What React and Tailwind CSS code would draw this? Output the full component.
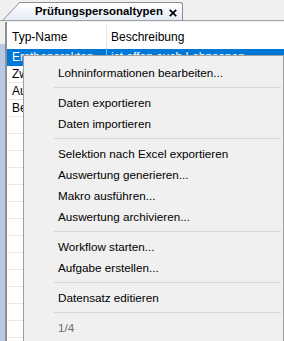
import React from "react";

const items = [
  { t: "Lohninformationen bearbeiten..." },
  { sep: true },
  { t: "Daten exportieren" },
  { t: "Daten importieren" },
  { sep: true },
  { t: "Selektion nach Excel exportieren" },
  { t: "Auswertung generieren..." },
  { t: "Makro ausführen..." },
  { t: "Auswertung archivieren..." },
  { sep: true },
  { t: "Workflow starten..." },
  { t: "Aufgabe erstellen..." },
  { sep: true },
  { t: "Datensatz editieren" },
  { sep: true },
  { t: "1/4", disabled: true },
];

const rows = [
  { a: "Ersthonorakten", b: "ist offen auch Lohnsonen", sel: true },
  { a: "Zweitberatung", b: "" },
  { a: "Auszahlung", b: "" },
  { a: "Berechnung", b: "" },
];

export default function App() {
  const filler = Array.from({ length: 14 });
  return (
    <div className="relative w-[284px] h-[341px] overflow-hidden bg-[#f0f0f0] font-['Segoe_UI','Liberation_Sans',sans-serif] text-[12px] text-black">
      {/* tab strip */}
      <div className="flex h-[21px] pt-[2px] border-b border-[#a0a0a0]">
        <div className="w-[3px]" />
        <svg width="17" height="18" viewBox="0 0 17 18" className="block">
          <defs>
            <linearGradient id="tg" x1="0" y1="0" x2="0" y2="1">
              <stop offset="0" stopColor="#ffffff" />
              <stop offset="1" stopColor="#e4ebf6" />
            </linearGradient>
          </defs>
          <polygon points="0,18 17,0 17,18" fill="url(#tg)" />
          <line x1="0" y1="18" x2="17" y2="0" stroke="#8c8c8c" strokeWidth="1" />
        </svg>
        <div className="flex h-[18px] w-[163px] items-center rounded-tr-[3px] border-t border-r border-[#8c8c8c] bg-gradient-to-b from-white to-[#e4ebf6] pl-[15px] pr-[5px] font-bold">
          <span className="leading-none whitespace-nowrap text-[11.4px]">Prüfungspersonaltypen</span>
          <svg width="8" height="8" viewBox="0 0 8 8" className="mt-[2px] ml-auto shrink-0">
            <path d="M0.8 0.8L7.2 7.2M7.2 0.8L0.8 7.2" stroke="#000" strokeWidth="1.7" />
          </svg>
        </div>
        <div className="flex-1" />
      </div>

      {/* panel */}
      <div className="mt-[1px] flex h-[319px]">
        <div className="flex w-[5px] flex-col">
          <div className="h-[22px] bg-[#f0f0f0]" />
          <div className="flex-1 bg-[#b9c9e5]" />
        </div>
        <div className="w-[2px] bg-[#8f8f8f]" />
        <div className="flex-1 bg-white">
          <div className="flex h-[27px] items-center pt-[2px]">
            <div className="flex h-full w-[100px] items-center border-r border-[#e5e5e5] pl-[5px]">Typ-Name</div>
            <div className="pl-[4px]">Beschreibung</div>
          </div>
          {rows.map((r, i) => (
            <div
              key={i}
              className={
                "flex h-[17px] items-center border-b " +
                (r.sel ? "bg-[#0078d7] text-white border-[#0078d7]" : "border-[#e8e8e8]")
              }
            >
              <div className={"w-[100px] pl-[5px] whitespace-nowrap overflow-hidden border-r " + (r.sel ? "border-[#7fb8eb]" : "border-transparent")}>{r.a}</div>
              <div className="pl-[4px] whitespace-nowrap">{r.b}</div>
            </div>
          ))}
          {filler.map((_, i) => (
            <div key={i} className="h-[17px] border-b border-[#e8e8e8]" />
          ))}
        </div>
      </div>

      {/* context menu */}
      <div className="absolute left-[23px] top-[55px] w-[261px] h-[290px] border border-[#a0a0a0] bg-[#f0f0f0] pt-[6px] text-[11.7px] shadow-[2px_2px_3px_rgba(0,0,0,0.2)]">
        {items.map((it, i) =>
          it.sep ? (
            <div key={i} className="flex h-[9px] items-center pl-[30px] pr-[2px]">
              <div className="h-px w-full bg-[#d7d7d7]" />
            </div>
          ) : (
            <div
              key={i}
              className={"flex h-[21px] items-center pl-[34px] whitespace-nowrap " + (it.disabled ? "text-[#6d6d6d]" : "")}
            >
              {it.t}
            </div>
          )
        )}
      </div>
    </div>
  );
}
